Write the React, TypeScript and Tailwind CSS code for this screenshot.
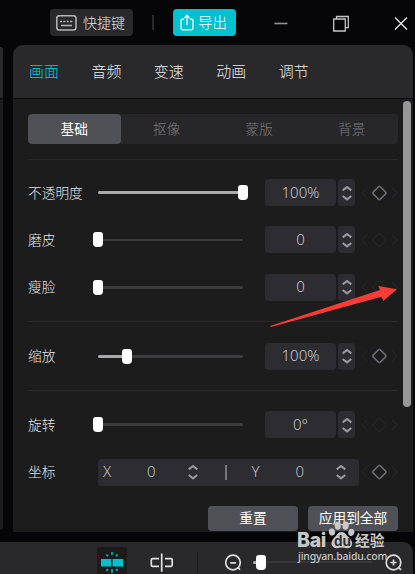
import React from 'react';

const tabs = ['画面', '音频', '变速', '动画', '调节'];
const modes = ['基础', '抠像', '蒙版', '背景'];

const Arrows = () => <svg width="10" height="16" viewBox="0 0 10 16" fill="none" stroke="#9b9a9d" strokeWidth="2">
    <path d="M0.7 5.4 5 2 9.3 5.4" />
    <path d="M0.7 11 5 14.4 9.3 11" />
  </svg>;

const Keyframe = ({ active = false }: { active?: boolean }) => <svg width="38" height="18" viewBox="0 0 38 18" fill="none" className="shrink-0">
    <path d="M7 4 2 9 7 14M32 4 37 9 32 14" stroke="#232325" strokeWidth="1.6" />
    <rect x="14.4" y="4" width="10" height="10" rx="1.2" transform="rotate(45 19.4 9)" stroke={active ? '#6d6b73' : '#242426'} strokeWidth="1.6" />
  </svg>;

const Slider = ({ percent }: { percent: number }) => <div className="relative flex h-[15px] w-[145px] shrink-0 items-center">
    <div className="h-[2.5px] w-full rounded bg-[#3d3d3f]">
      <div className="h-full rounded bg-[#aaaaac]" style={{ width: `${percent}%` }} />
    </div>
    <div className="absolute top-0 h-[15px] w-[10px] -translate-x-1/2 rounded-t-[3px] rounded-b-[4px] bg-white" style={{ left: `${percent}%` }} />
  </div>;

const Divider = () => <div className="h-px w-[370px] bg-[#29292b]" />;

type RowProps = {
  label: string;
  value: string;
  percent: number;
  active?: boolean;
};

const Row = ({ label, value, percent, active }: RowProps) => <div className="flex h-[27px] items-center">
    <div className="w-[70px] shrink-0 text-[13.7px] text-[#e6e6e7]">{label}</div>
    <Slider percent={percent} />
    <div className="ml-[22px] flex h-[27px] w-[71px] shrink-0 items-center justify-center rounded bg-[#2c2c31] pb-px text-[15px] text-[#cacacc]">
      {value}
    </div>
    <div className="ml-[2px] flex h-[27px] w-[17px] shrink-0 items-center justify-center rounded bg-[#2c2c31]">
      <Arrows />
    </div>
    <div className="ml-[5px]"><Keyframe active={active} /></div>
  </div>;

const TitleBar = () => <header className="flex h-[45px] items-center pl-[50px]">
    <button className="flex h-[27px] w-[83px] items-center rounded bg-[#29292b] pl-1.5 text-[14px] text-[#e2e2e3]">
      <svg width="21" height="16" viewBox="0 0 21 16" fill="none" stroke="#b6b6b9" strokeWidth="1.5">
        <rect x="0.8" y="0.8" width="19.2" height="14.2" rx="2.5" />
        <path d="M4 6.4h2M7.3 6.4h2.2M10.8 6.4h2M14.2 6.4h2.2M5 10.5h11" />
      </svg>
      <span className="ml-1.5 whitespace-nowrap">快捷键</span>
    </button>
    <div className="ml-[19px] h-[15px] w-0.5 bg-[#29292b]" />
    <button className="ml-[19px] flex h-[27px] w-[63px] items-center rounded bg-[#00c1cd] pl-[7px] text-[14.5px] text-white">
      <svg width="14" height="17" viewBox="0 0 14 17" fill="none" stroke="#dcfbfc" strokeWidth="1.4">
        <path d="M4 5.3H2.2Q1 5.3 1 6.5V14Q1 15.7 2.5 15.7H11.5Q13 15.7 13 14V6.5Q13 5.3 11.8 5.3H10M7 11V1.4M4.2 4.2 7 1.3 9.8 4.2" />
      </svg>
      <span className="ml-1 whitespace-nowrap">导出</span>
    </button>
    <svg className="ml-[38px]" width="134" height="18" viewBox="0 0 134 18" fill="none">
      <path d="M0.5 9.5H13.5" stroke="#929294" strokeWidth="1.6" />
      <path d="M59.7 5H71.3V17H59.7ZM62.5 5V2.5H74.3V13.7H71.3" stroke="#c5c5c6" strokeWidth="1.3" />
      <path d="M121 3.5 133 15.5M133 3.5 121 15.5" stroke="#e4e4e4" strokeWidth="1.4" />
    </svg>
  </header>;

const Coordinates = () => <div className="flex h-[27px] items-center">
    <div className="w-[70px] shrink-0 text-[13.7px] text-[#e6e6e7]">坐标</div>
    <div className="flex h-[27px] w-[261px] shrink-0 items-center rounded bg-[#2c2c31] text-[15px] text-[#c0c0c2]">
      <span className="w-[49px] pb-px pl-[5px]">X</span>
      <span className="w-[41px] pb-px">0</span>
      <Arrows />
      <span className="ml-[27px] h-[15px] w-[1.5px] bg-[#77777a]" />
      <span className="ml-[25px] w-[44px] pb-px">Y</span>
      <span className="w-[40px] pb-px">0</span>
      <Arrows />
    </div>
    <div className="ml-[1px]"><Keyframe active /></div>
  </div>;

const Watermark = () => <div className="absolute left-[297px] top-[520px] h-[44px] w-[90px] text-[#c8c8c8]">
    <div className="absolute left-0 top-[12px] font-['Inter'] text-[19.5px] font-extrabold leading-[16px] tracking-[-0.3px]">Bai</div>
    <svg className="absolute left-[31px] top-0" width="28" height="30" viewBox="0 0 28 30" fill="#c8c8c8">
      <ellipse cx="4" cy="12" rx="3.1" ry="3.6" transform="rotate(-12 4 12)" />
      <ellipse cx="9.8" cy="5.6" rx="3.1" ry="4.2" />
      <ellipse cx="17.6" cy="5.6" rx="3.1" ry="4.2" transform="rotate(10 17.6 5.6)" />
      <ellipse cx="23.3" cy="12.4" rx="3" ry="3.6" transform="rotate(15 23.3 12.4)" />
      <path d="M13.5 12C17.5 12 18.5 15.5 22 18.5C26 23 24 28.5 19 28.2C16 27.4 12 27.4 9 28.2C4 28.5 1.5 23 5.5 18.5C9 15.5 9.5 12 13.5 12Z" />
    </svg>
    <div className="absolute left-[37px] top-[14px] font-['Liberation_Sans'] text-[14px] font-bold leading-[14px] text-[#2d2d2f]">du</div>
    <div className="absolute left-[58px] top-[12px] whitespace-nowrap text-[14.7px] font-bold leading-[17px]">经验</div>
    <div className="absolute left-[1px] top-[30px] whitespace-nowrap font-['Noto_Sans'] text-[10.5px] font-medium leading-[13px] tracking-[-0.2px]">jingyan.baidu.com</div>
  </div>;

const BottomBar = () => <footer className="flex h-[32px] w-[413px] items-start rounded-tr-[10px] bg-[#29292b]">
    <div className="ml-[97px] mt-[5px] flex h-[27px] w-[30px] justify-center rounded-t bg-[#1b1b1c] pt-[4px]">
      <svg width="24" height="23" viewBox="0 0 24 23" stroke="#00c1cd" strokeWidth="1.5">
        <path d="M1.7 8.7H10.3V14.7H1.7ZM13.3 8.7H22.3V14.7H13.3Z" fill="#00c1cd" />
        <path d="M12 1V4M6.4 3.4 8 5.4M17.6 3.4 16 5.4M12 18V22M6.4 20 8 18M17.6 20 16 18" fill="none" />
      </svg>
    </div>
    <svg className="ml-[23px] mt-[11px]" width="24" height="20" viewBox="0 0 24 20" fill="none" stroke="#e1e1e2" strokeWidth="1.7">
      <path d="M9 5.7H2.5Q1.3 5.7 1.3 7V12Q1.3 13.3 2.5 13.3H9M15 5.7H21Q22.2 5.7 22.2 7V12Q22.2 13.3 21 13.3H15M11.7 0.5V18.8" />
    </svg>
    <div className="ml-[23px] mt-[10px] h-[22px] w-px bg-[#1c1c1d]" />
    <svg className="ml-[26px] mt-[11px]" width="18" height="18" viewBox="0 0 18 18" fill="none" stroke="#dcdcde" strokeWidth="1.7">
      <circle cx="9" cy="9.5" r="7.3" />
      <path d="M6.2 9.8H12M14 14.3 16 16.8" />
    </svg>
    <div className="relative ml-[11px] mt-[12px] flex h-[16px] w-[120px] items-center">
      <div className="h-[2px] w-full rounded bg-[#38383a]" />
      <div className="absolute left-0 h-[3px] w-[8px] rounded bg-[#aaa]" />
      <div className="absolute left-[3px] top-[1px] h-[15px] w-[10px] rounded-t-[3px] rounded-b-[4px] bg-white" />
    </div>
    <svg className="ml-[12px] mt-[11px]" width="18" height="18" viewBox="0 0 18 18" fill="none" stroke="#dcdcde" strokeWidth="1.7">
      <circle cx="8.5" cy="9.5" r="7.3" />
      <path d="M5.4 9.5H11.6M8.5 6.4V12.6M13.5 14.3 16 16.8" />
    </svg>
  </footer>;

export default function App() {
  return <div className="relative flex h-[574px] w-[415px] flex-col overflow-hidden bg-[#060608] font-['Noto_Sans','Noto_Sans_CJK_SC',sans-serif] font-light leading-none">
      <TitleBar />
      <div className="flex h-[487px] gap-[10px]">
        <div className="mt-0.5 flex h-[483px] w-[3px] flex-col overflow-hidden rounded-r-[3px] bg-[#1c1c1c]">
          <div className="h-[52px] border-b border-black bg-[#29292b]" />
        </div>
        <main className="w-[400px] overflow-hidden rounded-t-[10px] bg-[#1c1c1c]">
          <nav className="flex h-[54px] items-center gap-[32.4px] border-b border-[#0c0c0d] bg-[#29292b] pl-4 text-[15px] text-[#ececec]">
            {tabs.map((tab, index) => <span key={tab} className={index === 0 ? 'text-[#00cfdb]' : ''}>{tab}</span>)}
          </nav>
          <div className="flex flex-col pl-[15px] pt-[15px]">
            <div className="flex h-[30px] w-[370px] overflow-hidden rounded bg-[#272729] text-[13.7px] text-[#7b7b7d]">
              {modes.map((mode, index) => <div key={mode} className={index === 0 ? 'flex flex-1 items-center justify-center rounded bg-[#505157] font-normal text-white' : 'flex flex-1 items-center justify-center'}>
                  {mode}
                </div>)}
            </div>
            <div className="mt-[15px] mb-[19px]"><Divider /></div>
            <div className="flex flex-col gap-[20.4px]">
              <Row label="不透明度" value="100%" percent={100} active />
              <Row label="磨皮" value="0" percent={0} />
              <Row label="瘦脸" value="0" percent={0} />
            </div>
            <div className="mt-[20px] mb-[21px]"><Divider /></div>
            <Row label="缩放" value="100%" percent={20} active />
            <div className="my-[20.2px]"><Divider /></div>
            <Row label="旋转" value="0°" percent={0} />
            <div className="mt-[20.6px]"><Coordinates /></div>
            <div className="mt-[20px] flex gap-[10px] pl-[180px] text-[13.7px] text-white">
              <button className="h-[25px] w-[90px] rounded bg-[#505157] font-normal">重置</button>
              <button className="h-[25px] w-[90px] rounded bg-[#505157] font-normal">应用到全部</button>
            </div>
          </div>
        </main>
      </div>
      <div className="mt-[10px]"><BottomBar /></div>
      {/* scrollbar thumb */}
      <div className="absolute left-[403px] top-[101px] h-[306px] w-[8px] rounded-full bg-[#979797]" />
      <svg className="absolute left-[269px] top-[285px]" width="129" height="44" viewBox="0 0 129 44" fill="#ff3b36">
        <path d="M1 41 111 5 109.3 1 127.9 4.3 114.3 15.9 112.5 11.8 2 42Z" />
      </svg>
      <Watermark />
    </div>;
}
